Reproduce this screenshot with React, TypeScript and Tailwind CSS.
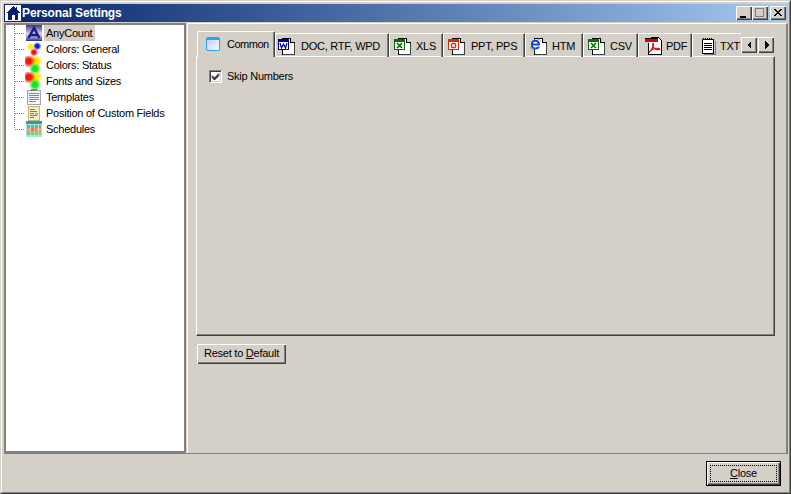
import React from "react";

const FONT = "font-['Liberation_Sans',Arial,sans-serif]";

function Connector({ last }: { last?: boolean }) {
  return (
    <svg width="10" height="16" className="shrink-0" shapeRendering="crispEdges">
      <line x1="0.5" y1={0} x2="0.5" y2={last ? 8 : 16} stroke="#808080" strokeDasharray="1 1" />
      <line x1="1" y1="8.5" x2="10" y2="8.5" stroke="#808080" strokeDasharray="1 1" />
    </svg>
  );
}

function AnyCountIcon() {
  return (
    <svg width="16" height="16" viewBox="0 0 16 16">
      <defs>
        <linearGradient id="ac" x1="0" y1="0" x2="0" y2="1">
          <stop offset="0" stopColor="#3a35a0" />
          <stop offset="0.55" stopColor="#d6d4ec" />
          <stop offset="0.8" stopColor="#8a88c8" />
          <stop offset="1" stopColor="#2a259a" />
        </linearGradient>
      </defs>
      <rect width="16" height="16" fill="url(#ac)" />
      <path d="M2.500 13 L8 3 L13.500 13 M5 10 H11" fill="none" stroke="#1c1a78" strokeWidth="2.4" />
    </svg>
  );
}

function Blob({ cx, cy, r, c }: { cx: number; cy: number; r: number; c: string }) {
  const id = "g" + c.slice(1);
  return (
    <>
      <defs>
        <radialGradient id={id}>
          <stop offset="0.4" stopColor={c} />
          <stop offset="1" stopColor={c} stopOpacity="0" />
        </radialGradient>
      </defs>
      <circle cx={cx} cy={cy} r={r} fill={`url(#${id})`} />
    </>
  );
}

function ColorsGeneral() {
  return (
    <svg width="18" height="16" viewBox="0 0 18 16">
      <Blob cx={6} cy={5.5} r={4.5} c="#ffee00" />
      <Blob cx={13} cy={5} r={4.5} c="#0818f0" />
      <Blob cx={9.500} cy={11.500} r={4.5} c="#f01010" />
    </svg>
  );
}

function ColorsStatus() {
  return (
    <svg width="18" height="18" viewBox="0 0 18 18">
      <Blob cx={11.5} cy={5} r={7} c="#ffe800" />
      <Blob cx={4} cy={5} r={7} c="#f81808" />
      <Blob cx={10.5} cy={13} r={6.5} c="#10e820" />
    </svg>
  );
}

function TemplatesIcon() {
  return (
    <svg width="16" height="16" viewBox="0 0 16 16" shapeRendering="crispEdges">
      <rect x="1.500" y="1.500" width="13" height="14" fill="#f4f6fb" stroke="#a0a4ac" />
      <rect x="5" y="0" width="6" height="2" fill="#808488" />
      <path d="M3 4.500H13M3 6.500H13M3 8.500H13M3 10.500H13M3 12.500H10" stroke="#5a8ee0" />
    </svg>
  );
}

function PositionIcon() {
  return (
    <svg width="16" height="16" viewBox="0 0 16 16" shapeRendering="crispEdges">
      <rect x="2" y="1" width="12" height="15" fill="#c8b468" />
      <rect x="3" y="2" width="10" height="13" fill="#f0ecc8" />
      <path d="M4 4.500H9M4 6.500H11M4 8.500H8M4 10.500H11M4 12.500H8" stroke="#7c7c70" />
      <rect x="9" y="8" width="3" height="2" fill="#c8b468" />
    </svg>
  );
}

function SchedulesIcon() {
  return (
    <svg width="16" height="16" viewBox="0 0 16 16" shapeRendering="crispEdges">
      <rect width="16" height="16" fill="#a8e0f0" />
      <rect x="0" y="0" width="16" height="3" fill="#3098c0" />
      <rect x="1" y="4" width="14" height="3" fill="#58c878" />
      <rect x="1" y="7" width="14" height="3" fill="#f0a080" />
      <rect x="4" y="7" width="6" height="3" fill="#e87850" />
      <rect x="1" y="10" width="14" height="4" fill="#78d068" />
      <path d="M4.500 4V14M8.500 4V14M12.500 4V14" stroke="#ffffff" strokeOpacity="0.5" />
    </svg>
  );
}

function CommonIcon() {
  return (
    <svg width="16" height="16" viewBox="0 0 16 16">
      <defs>
        <linearGradient id="cm" x1="0" y1="0" x2="1" y2="1">
          <stop offset="0" stopColor="#b8c8f8" />
          <stop offset="1" stopColor="#ffffff" />
        </linearGradient>
      </defs>
      <rect x="1.500" y="1.500" width="13" height="13" rx="1.5" fill="url(#cm)" stroke="#30a0f0" />
      <rect x="2" y="2" width="12" height="2" fill="#30a0f0" />
    </svg>
  );
}

function Page({ children }: { children?: React.ReactNode }) {
  return (
    <svg width="18" height="17" viewBox="0 0 18 17" shapeRendering="crispEdges">
      <path d="M4.500 0.500H12.500L16.500 4.500V16.500H4.500Z" fill="#ffffff" stroke="#000000" />
      <path d="M12.500 0.500V4.500H16.500" fill="#d0d0d0" stroke="#000000" />
      <path d="M16.500 5V16.500H5" fill="none" stroke="#404040" />
      {children}
    </svg>
  );
}

function WordIcon() {
  return (
    <Page>
      <rect x="0.500" y="1.500" width="10" height="10" fill="#ffffff" stroke="#000090" />
      <rect x="1" y="2" width="9" height="2" fill="#000090" />
      <path d="M2 5L3.500 10L5.500 6L7.500 10L9 5" fill="none" stroke="#0000a0" strokeWidth="1.2" shapeRendering="auto" />
    </Page>
  );
}

function ExcelIcon() {
  return (
    <Page>
      <rect x="0.500" y="1.500" width="10" height="10" fill="#ffffff" stroke="#007000" />
      <rect x="1" y="2" width="9" height="2" fill="#007000" />
      <path d="M3 5L8 10M8 5L3 10" stroke="#007000" strokeWidth="1.6" shapeRendering="auto" />
    </Page>
  );
}

function PptIcon() {
  return (
    <Page>
      <rect x="0.500" y="1.500" width="10" height="10" fill="#ffffff" stroke="#d03000" />
      <rect x="1" y="2" width="9" height="2" fill="#d03000" />
      <circle cx="5.500" cy="7.500" r="2.2" fill="none" stroke="#d03000" strokeWidth="1.3" shapeRendering="auto" />
    </Page>
  );
}

function HtmIcon() {
  return (
    <Page>
      <circle cx="5.500" cy="6.500" r="5" fill="#ffffff" shapeRendering="auto" />
      <path
        d="M2 6.500H9C9 4 7.500 2.800 5.500 2.800C3.300 2.800 1.800 4.500 1.800 6.800C1.800 9.200 3.300 10.600 5.500 10.600C7.200 10.600 8.300 10 9 8.800"
        fill="none"
        stroke="#0848d8"
        strokeWidth="2"
        shapeRendering="auto"
      />
      <path d="M1 9C-0.500 12 2 12.500 4.500 11M7.500 1.500C10 0.500 11 2 10 4" fill="none" stroke="#d8b030" strokeWidth="1" shapeRendering="auto" />
    </Page>
  );
}

function PdfIcon() {
  return (
    <svg width="18" height="18" viewBox="0 0 18 18" shapeRendering="crispEdges">
      <path d="M5.500 0.500H13.500L16.500 3.500V17.500H3.500V6" fill="#ffffff" stroke="#000000" />
      <rect x="0" y="2" width="13" height="3" fill="#e00000" />
      <rect x="0" y="1" width="13" height="1" fill="#000000" />
      <path
        d="M4 15.500C6 14 9 9 8.500 6.500C8 5.500 7.300 7 8 9C9 11.500 11.500 13 14.500 12.500C15.500 11.500 12 10.700 9 11.700C7 12.300 5 13.500 4 15.500Z"
        fill="none"
        stroke="#e80000"
        strokeWidth="1.1"
        shapeRendering="auto"
      />
    </svg>
  );
}

function TxtIcon() {
  return (
    <svg width="16" height="17" viewBox="0 0 16 17" shapeRendering="crispEdges">
      <rect x="2.500" y="1.500" width="11" height="14" fill="#ffffff" stroke="#000000" />
      <path d="M3 0.500H13" stroke="#000000" strokeDasharray="1 1" />
      <path d="M4 5.500H12M4 7.500H12M4 9.500H12M4 11.500H12" stroke="#000000" />
      <path d="M4 16.500H15V3" fill="none" stroke="#808080" />
    </svg>
  );
}

const treeItems = [
  { label: "AnyCount", icon: <AnyCountIcon />, selected: true },
  { label: "Colors: General", icon: <ColorsGeneral /> },
  { label: "Colors: Status", icon: <ColorsStatus /> },
  { label: "Fonts and Sizes", icon: <ColorsStatus /> },
  { label: "Templates", icon: <TemplatesIcon /> },
  { label: "Position of Custom Fields", icon: <PositionIcon /> },
  { label: "Schedules", icon: <SchedulesIcon /> },
];

const tabs = [
  { label: "DOC, RTF, WPD", icon: <WordIcon />, w: "w-[114px] pl-[2px]", gap: "ml-[5px]" },
  { label: "XLS", icon: <ExcelIcon />, w: "w-[54px] pl-[4px]", gap: "ml-[4px]" },
  { label: "PPT, PPS", icon: <PptIcon />, w: "w-[82px] pl-[4px]", gap: "ml-[5px]" },
  { label: "HTM", icon: <HtmIcon />, w: "w-[58px] pl-[4px]", gap: "ml-[4px]" },
  { label: "CSV", icon: <ExcelIcon />, w: "w-[55px] pl-[4px]", gap: "ml-[4px]" },
  { label: "PDF", icon: <PdfIcon />, w: "w-[54px] pl-[6px]", gap: "ml-[3px]" },
];

const raised =
  "shadow-[inset_1px_1px_0_#ffffff,inset_-1px_-1px_0_#404040,inset_-2px_-2px_0_#808080]";

function ArrowButton({ dir }: { dir: "l" | "r" }) {
  return (
    <div className={`w-[16px] h-[16px] bg-[#d4d0c8] flex items-center justify-center ${raised}`}>
      <svg width="5" height="8" viewBox="0 0 5 8" shapeRendering="crispEdges">
        <path d={dir === "l" ? "M4 0V8L0 4Z" : "M1 0V8L5 4Z"} fill="#000000" />
      </svg>
    </div>
  );
}

function WinButton({ children, className }: { children: React.ReactNode; className?: string }) {
  return (
    <div className={`w-[16px] h-[14px] bg-[#d4d0c8] flex items-center justify-center ${raised} ${className ?? ""}`}>
      <svg width="16" height="14" viewBox="0 0 16 14" shapeRendering="crispEdges">
        {children}
      </svg>
    </div>
  );
}

export default function App() {
  return (
    <div className={`${FONT} w-[791px] h-[494px] overflow-hidden bg-[#d4d0c8] text-black text-[11px] tracking-[-0.25px] leading-none select-none`}>
      <div className="h-full border border-t-[#d4d0c8] border-l-[#d4d0c8] border-r-[#404040] border-b-[#404040]">
        <div className="h-full flex flex-col border border-t-white border-l-white border-r-[#808080] border-b-[#808080] pl-[2px] pr-[1px] pt-[2px] pb-[2px]">
          {/* Title bar */}
          <div className="h-[18px] shrink-0 flex items-center bg-gradient-to-r from-[#0a246a] to-[#a6caf0] pl-[1px] pr-[2px]">
            <svg width="16" height="16" viewBox="0 0 16 16" shapeRendering="crispEdges" className="shrink-0">
              <rect width="16" height="16" fill="#ffffff" />
              <path d="M8 1L1 8H3V15H6.500V10H9.500V15H13V8H15L12 5V2H10.500V3.500Z" fill="#0a1a78" />
            </svg>
            <span className="ml-[1px] text-white font-bold text-[12px] tracking-[-0.1px]">Personal Settings</span>
            <div className="ml-auto flex items-center">
              <WinButton>
                <rect x="4" y="10" width="6" height="2" fill="#000000" />
              </WinButton>
              <WinButton>
                <rect x="3.500" y="2.500" width="8" height="8" fill="none" stroke="#808080" />
                <rect x="3" y="2" width="9" height="1" fill="#808080" />
              </WinButton>
              <WinButton className="ml-[2px]">
                <path d="M4 3L11 10M5 3L12 10M11 3L4 10M12 3L5 10" stroke="#000000" shapeRendering="auto" />
              </WinButton>
            </div>
          </div>

          {/* Body */}
          <div className="h-[430px] shrink-0 mt-[1px] flex">
            {/* Tree */}
            <div className="w-[182px] shrink-0 border-2 border-[#808080] bg-white pl-[8px] overflow-hidden">
              {treeItems.map((it, i) => (
                <div key={it.label} className="h-[16px] flex items-center">
                  <Connector last={i === treeItems.length - 1} />
                  <div className="w-[17px] h-[16px] shrink-0 flex items-center justify-center ml-[1px]">{it.icon}</div>
                  <span className={`ml-[2px] h-[16px] flex items-center px-[2px] pt-[1px] whitespace-nowrap ${it.selected ? "bg-[#d4d0c8] pr-[3px]" : ""}`}>
                    {it.label}
                  </span>
                </div>
              ))}
            </div>

            {/* Right pane */}
            <div className="flex-1 ml-[1px] border-l border-t border-l-white border-t-white border-r-2 border-r-[#808080] pl-[8px] pt-[7px] flex flex-col min-w-0">
              <div className="h-[26px] flex pl-[1px] relative z-10">
                <div className="w-[78px] h-[26px] bg-[#d4d0c8] rounded-t-[2px] border-l border-t border-white border-r border-r-[#404040] shadow-[inset_-1px_0_0_#808080] flex items-center pl-[7px] pb-[1px] shrink-0">
                  <CommonIcon />
                  <span className="ml-[6px] whitespace-nowrap tracking-[-0.5px]">Common</span>
                </div>
                {tabs.map((t) => (
                  <div
                    key={t.label}
                    className={`${t.w} h-[24px] mt-[2px] mb-[1px] pt-[1px] shrink-0 border-l border-t border-white border-r border-r-[#404040] shadow-[inset_-1px_0_0_#808080] flex items-center whitespace-nowrap`}
                  >
                    <span className="shrink-0 w-[18px] flex justify-center">{t.icon}</span>
                    <span className={t.gap}>{t.label}</span>
                  </div>
                ))}
                <div className="w-[49px] h-[24px] mt-[2px] mb-[1px] pt-[1px] shrink-0 border-l border-t border-white flex items-center pl-[7px] overflow-hidden whitespace-nowrap">
                  <span className="shrink-0"><TxtIcon /></span>
                  <span className="ml-[4px]">TXT</span>
                </div>
                <div className="flex mt-[6px] h-[16px] gap-[1px]">
                  <ArrowButton dir="l" />
                  <ArrowButton dir="r" />
                </div>
              </div>

              <div className="w-[579px] h-[280px] -mt-px border-l border-t border-white border-r border-b border-r-[#404040] border-b-[#404040] shadow-[inset_-1px_-1px_0_#808080] pl-[12px] pt-[13px]">
                <div className="flex items-center h-[13px]">
                  <div className="w-[13px] h-[13px] bg-white border border-t-[#808080] border-l-[#808080] border-r-white border-b-white shadow-[inset_1px_1px_0_#404040,inset_-1px_-1px_0_#d4d0c8] flex items-center justify-center shrink-0">
                    <svg width="9" height="9" viewBox="0 0 9 9" shapeRendering="crispEdges">
                      <path d="M1 3.500L3.500 6L8 1.500M1 4.500L3.500 7L8 2.500M1 5.500L3.500 8L8 3.500" fill="none" stroke="#000000" shapeRendering="auto" />
                    </svg>
                  </div>
                  <span className="ml-[5px]">Skip Numbers</span>
                </div>
              </div>

              <div className={`mt-[8px] ml-[1px] pb-[2px] w-[89px] h-[20px] flex items-center justify-center ${raised}`}>
                <span>
                  Reset to <span className="underline">D</span>efault
                </span>
              </div>
            </div>
          </div>

          {/* Footer */}
          <div className="flex-1 border-t border-t-[#808080] flex justify-end items-start pt-[7px] pr-[7px]">
            <div className={`w-[75px] h-[25px] border border-black p-[3px] ${raised} flex`}>
              <div className="flex-1 border border-dotted border-black flex items-center justify-center">
                <span>
                  <span className="underline">C</span>lose
                </span>
              </div>
            </div>
          </div>
        </div>
      </div>
    </div>
  );
}
